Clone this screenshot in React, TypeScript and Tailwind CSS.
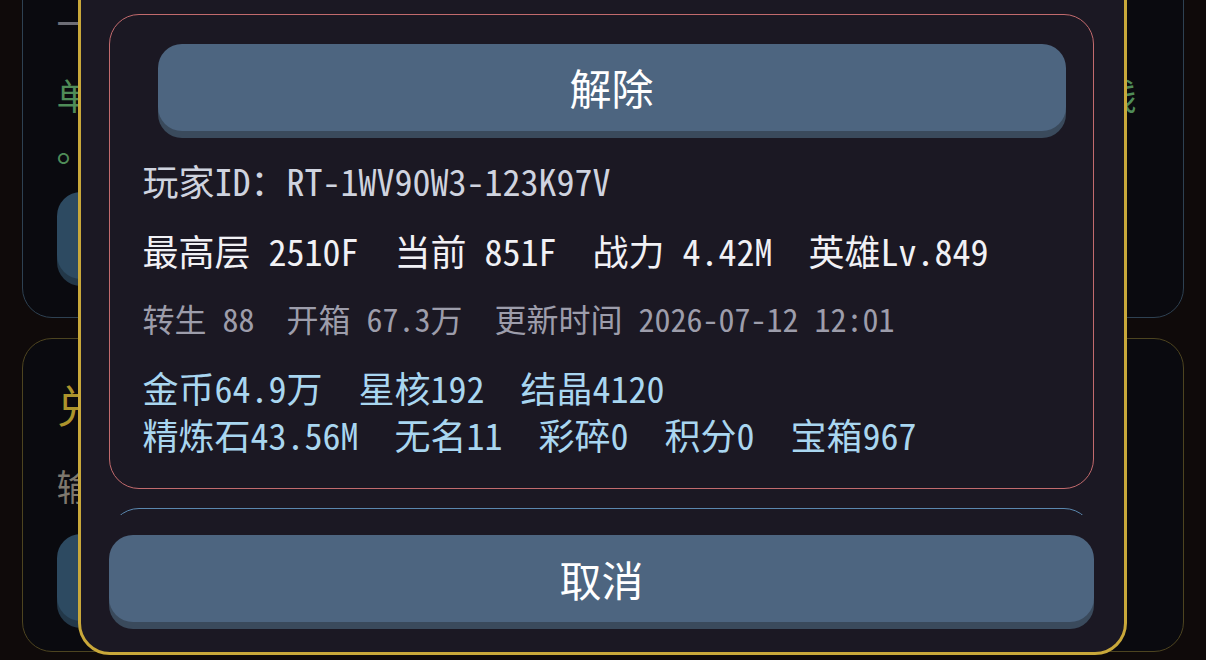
import React from "react";

const FONT = "font-['Noto_Sans_Mono_CJK_SC','Noto_Sans_CJK_SC',monospace]";

function RaisedButton({
  label,
  className,
}: {
  label: string;
  className: string;
}) {
  return (
    <div
      className={`flex h-[87px] items-center justify-center rounded-[24px] bg-[#4d6580] shadow-[0_7px_0_#3a4a5c] ${className}`}
    >
      <span className="text-[42px] leading-none text-white">{label}</span>
    </div>
  );
}

export default function App() {
  return (
    <div
      className={`relative h-[660px] w-[1206px] overflow-hidden bg-[#0f0a0a] px-[22px] ${FONT}`}
    >
      {/* binding notice card (behind the dialog) */}
      <div className="-mt-[30px] rounded-[30px] border-[1.5px] border-[#2e4152] bg-[#0a0a0f] px-[33.5px] pt-[28.5px] pb-[38px]">
        <div className="h-[44px] whitespace-nowrap text-[36px] leading-[44px] text-[#6e6e76]">
          一键绑定管理
        </div>
        <p className="mt-[24px] whitespace-nowrap text-[36px] leading-[52px] text-[#4f8c58]">
          单个账号仅能绑定一名玩家，解除绑定后该玩家将会立即被强制下线
          <br />。
        </p>
        <div className="mt-[20px] h-[87px] w-[520px] rounded-[24px] bg-[#2d4a61] shadow-[0_7px_0_#233849]" />
      </div>

      {/* redeem card (behind the dialog) */}
      <div className="mt-[20px] rounded-[30px] border-[1.5px] border-[#4d4420] bg-[#0a0a0f] px-[33.5px] pt-[37px] pb-[30px]">
        <div className="h-[56px] whitespace-nowrap text-[44px] leading-[56px] text-[#ad942c]">
          兑换码
        </div>
        <div className="mt-[31px] h-[44px] whitespace-nowrap text-[36px] leading-[44px] text-[#7d786e]">
          输入兑换码领取奖励
        </div>
        <div className="mt-[27px] h-[87px] w-[520px] rounded-[24px] bg-[#2d4a61] shadow-[0_7px_0_#233849]" />
      </div>

      {/* unbind dialog */}
      <div className="absolute left-[78px] top-[-40px] flex h-[695px] w-[1049px] flex-col rounded-[32px] border-[3px] border-[#c9a83a] bg-[#1b1823] pl-[28px] pr-[30px] pt-[51px] pb-[30px]">
        <div className="flex-1 overflow-hidden">
          <div className="rounded-[30px] border-[1.5px] border-[#c26a6d] pt-[28.5px] pb-[30px] pl-[32.5px] pr-[27.5px]">
            <RaisedButton label="解除" className="ml-[15px]" />

            <div className="mt-[27px] h-[44px] whitespace-pre text-[36px] leading-[44px] text-[#cfd3df]">
              玩家ID：RT-1WV90W3-123K97V
            </div>
            <div className="mt-[26px] h-[44px] whitespace-pre text-[36px] leading-[44px] text-[#f1f1f5]">
              最高层 2510F  当前 851F  战力 4.42M  英雄Lv.849
            </div>
            <div className="mt-[24px] h-[44px] whitespace-pre text-[32px] leading-[44px] text-[#9d9dab]">
              转生 88  开箱 67.3万  更新时间 2026-07-12 12:01
            </div>
            <div className="mt-[24.5px] text-[36px] leading-[47px] text-[#a9d6f0]">
              <div className="h-[47px] whitespace-pre">
                金币64.9万  星核192  结晶4120
              </div>
              <div className="h-[47px] whitespace-pre">
                精炼石43.56M  无名11  彩碎0  积分0  宝箱967
              </div>
            </div>
          </div>

          <div className="mt-[19px] h-[200px] rounded-[30px] border-[1.5px] border-[#5a87ae]" />
        </div>

        <RaisedButton label="取消" className="mt-[20px]" />
      </div>
    </div>
  );
}
